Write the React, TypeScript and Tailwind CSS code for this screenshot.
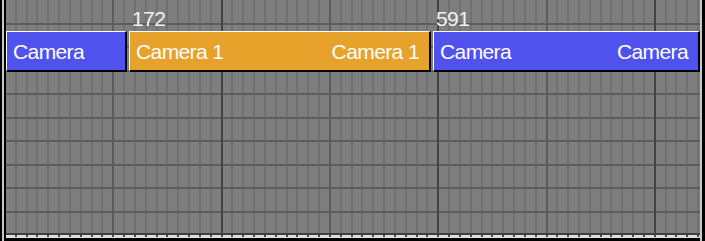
import React from 'react';

const font = { fontFamily: '"Liberation Sans", Arial, sans-serif' };

// grid positions, in coordinates of the canvas (page x - 6)
const vLines = Array.from({ length: 65 }, (_, k) => ({
  k,
  x: Math.round(4 + 10.83 * k) - 6,
})).filter((l) => l.x >= 0 && l.x < 694);

const hLines = Array.from({ length: 10 }, (_, k) => Math.round(23 + 23.47 * k)).filter((y) => y < 232);

function GridLines() {
  return (
    <svg className="absolute inset-0" width={694} height={233} shapeRendering="crispEdges">
      {vLines
        .filter((l) => l.k % 10 !== 0)
        .map((l) => (
          <rect key={'m' + l.k} x={l.x} y={0} width={2} height={233} fill="#717171" />
        ))}
      {hLines.map((y) => (
        <rect key={'h' + y} x={0} y={y} width={694} height={2} fill="#5d5d5d" />
      ))}
      {vLines
        .filter((l) => l.k % 10 === 0)
        .map((l) => (
          <rect
            key={'M' + l.k}
            x={l.x}
            y={0}
            width={2}
            height={233}
            fill={l.k % 20 === 0 ? '#434343' : '#5c5c5c'}
          />
        ))}
    </svg>
  );
}

function Clip({
  width,
  color,
  left,
  right,
}: {
  width: number;
  color: 'blue' | 'orange';
  left: string;
  right?: string;
}) {
  return (
    <div
      style={{ width }}
      className={
        'h-[41px] shrink-0 flex items-center justify-between border-l border-t border-r-2 border-b-2 border-l-white border-t-white border-r-black border-b-black pl-[6px] pr-[10px] text-white text-[21px] leading-[21px] tracking-[-0.6px] ' +
        (color === 'blue' ? 'bg-[#5052ee]' : 'bg-[#e7a22b]')
      }
    >
      <span>{left}</span>
      {right && <span>{right}</span>}
    </div>
  );
}

export default function App() {
  const ticks = vLines.filter((l) => l.k > 0);

  return (
    <div className="w-[705px] h-[241px] flex bg-black" style={font}>
      <div className="w-[2px] bg-black" />
      <div className="w-[2px] bg-[#c9c9c9]" />
      <div className="w-[2px] bg-black" />

      <div className="w-[694px] flex flex-col">
        {/* track canvas */}
        <div className="relative h-[233px] bg-[#7e7e7e] overflow-hidden">
          <GridLines />
          <div className="relative flex flex-col">
            <div className="h-[31px] flex gap-[2px] text-[#f2f2f2] text-[21px] leading-[21px] tracking-[-0.6px] pt-[8px]">
              <div className="w-[121px] shrink-0" />
              <div className="w-[302px] shrink-0 pl-[3px]">172</div>
              <div className="w-[267px] shrink-0 pl-[3px]">591</div>
            </div>
            <div className="flex gap-[2px]">
              <Clip width={121} color="blue" left="Camera" />
              <Clip width={302} color="orange" left="Camera 1" right="Camera 1" />
              <Clip width={267} color="blue" left="Camera" right="Camera" />
            </div>
          </div>
        </div>

        {/* ruler */}
        <div className="h-[2px] bg-[#3e3e3e]" />
        <div className="h-[3px] bg-[#dedede]">
          <svg width={694} height={3} shapeRendering="crispEdges" className="block">
            {ticks.map((l) => (
              <rect key={l.k} x={l.x} y={0} width={2} height={2} fill="#4a4a4a" />
            ))}
          </svg>
        </div>
        <div className="h-[3px] bg-black" />
      </div>

      <div className="w-[2px] bg-[#c9c9c9]" />
      <div className="w-[3px] bg-black" />
    </div>
  );
}
